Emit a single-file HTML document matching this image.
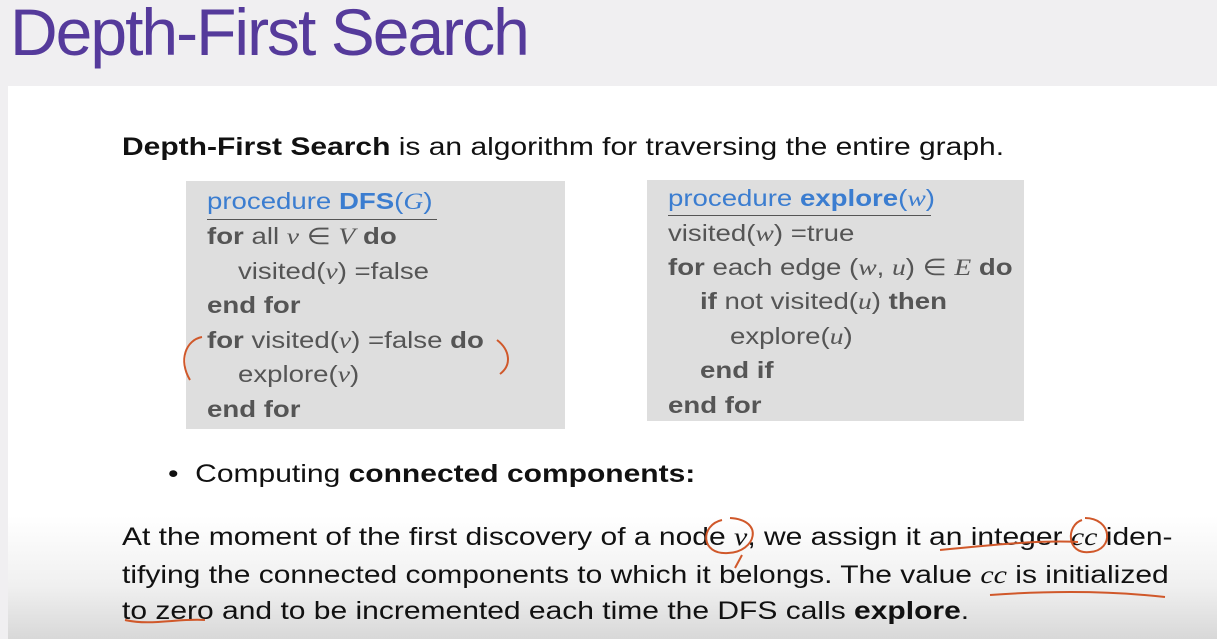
<!DOCTYPE html>
<html><head><meta charset="utf-8"><style>
body{margin:0;width:1217px;height:639px;overflow:hidden;position:relative;background:#f0eff1;font-family:"Liberation Sans",sans-serif}
.panel{position:absolute;left:8px;top:86px;width:1209px;height:553px;background:linear-gradient(#fff 0,#fff 430px,#f0f0f0 500px,#d8d8d8 553px)}
.t{position:absolute;white-space:nowrap;transform-origin:left top}
.title{left:10px;top:-6px;font-size:66px;color:#553a9b;letter-spacing:-2px}
.box{position:absolute;background:#dedede}
.c{font-size:23px;color:#555;transform:scaleX(1.2)}
.blue{color:#3b7dd0}
b{font-weight:bold}
i{font-family:"Liberation Serif",serif}
.m{font-size:25px;color:#111;transform:scaleX(1.2)}
</style></head><body>
<div class="t title">Depth-First Search</div>
<div class="panel"></div>
<div class="t m" style="left:122px;top:133px"><b>Depth-First Search</b> is an algorithm for traversing the entire graph.</div>
<div class="box" style="left:186px;top:181px;width:379px;height:248px"></div>
<div class="box" style="left:647px;top:180px;width:377px;height:241px"></div>
<div class="t c blue" style="left:207px;top:188px">procedure <b>DFS</b>(<i>G</i>)</div>
<div style="position:absolute;left:207px;top:219px;width:230px;height:1px;background:#555"></div>
<div class="t c" style="left:207px;top:223px"><b>for</b> all <i>v</i> ∈ <i>V</i> <b>do</b></div>
<div class="t c" style="left:238px;top:258px">visited(<i>v</i>) =false</div>
<div class="t c" style="left:207px;top:292px"><b>end for</b></div>
<div class="t c" style="left:207px;top:327px"><b>for</b> visited(<i>v</i>) =false <b>do</b></div>
<div class="t c" style="left:238px;top:361px">explore(<i>v</i>)</div>
<div class="t c" style="left:207px;top:396px"><b>end for</b></div>
<div class="t c blue" style="left:668px;top:185px">procedure <b>explore</b>(<i>w</i>)</div>
<div style="position:absolute;left:668px;top:215px;width:263px;height:1px;background:#555"></div>
<div class="t c" style="left:668px;top:220px">visited(<i>w</i>) =true</div>
<div class="t c" style="left:668px;top:254px"><b>for</b> each edge (<i>w</i>, <i>u</i>) ∈ <i>E</i> <b>do</b></div>
<div class="t c" style="left:700px;top:288px"><b>if</b> not visited(<i>u</i>) <b>then</b></div>
<div class="t c" style="left:730px;top:323px">explore(<i>u</i>)</div>
<div class="t c" style="left:700px;top:357px"><b>end if</b></div>
<div class="t c" style="left:668px;top:392px"><b>end for</b></div>
<div class="t m" style="left:168px;top:460px">•&nbsp;&nbsp;Computing <b>connected components:</b></div>
<div class="t m" style="left:122px;top:523px">At the moment of the first discovery of a node <i>v</i>, we assign it an integer <i>cc</i> iden-</div>
<div class="t m" style="left:122px;top:561px">tifying the connected components to which it belongs. The value <i>cc</i> is initialized</div>
<div class="t m" style="left:122px;top:597px">to zero and to be incremented each time the DFS calls <b>explore</b>.</div>
<svg style="position:absolute;left:0;top:0" width="1217" height="639" fill="none" stroke="#d0582a" stroke-width="2">
<path d="M202 337 C186 340 178 360 190 380"/>
<path d="M497 340 C510 350 512 365 500 374"/>
<path d="M722 520 C700 525 700 555 728 553 C756 552 765 520 730 518"/>
<path d="M1082 520 C1066 525 1066 555 1090 552 C1115 550 1112 518 1085 518"/>
<path d="M940 550 C990 545 1040 540 1078 542"/>
<path d="M990 595 C1060 590 1120 592 1165 597"/>
<path d="M125 620 C150 626 180 618 205 620"/>
<path d="M742 555 L735 568"/>
</svg>
</body></html>
